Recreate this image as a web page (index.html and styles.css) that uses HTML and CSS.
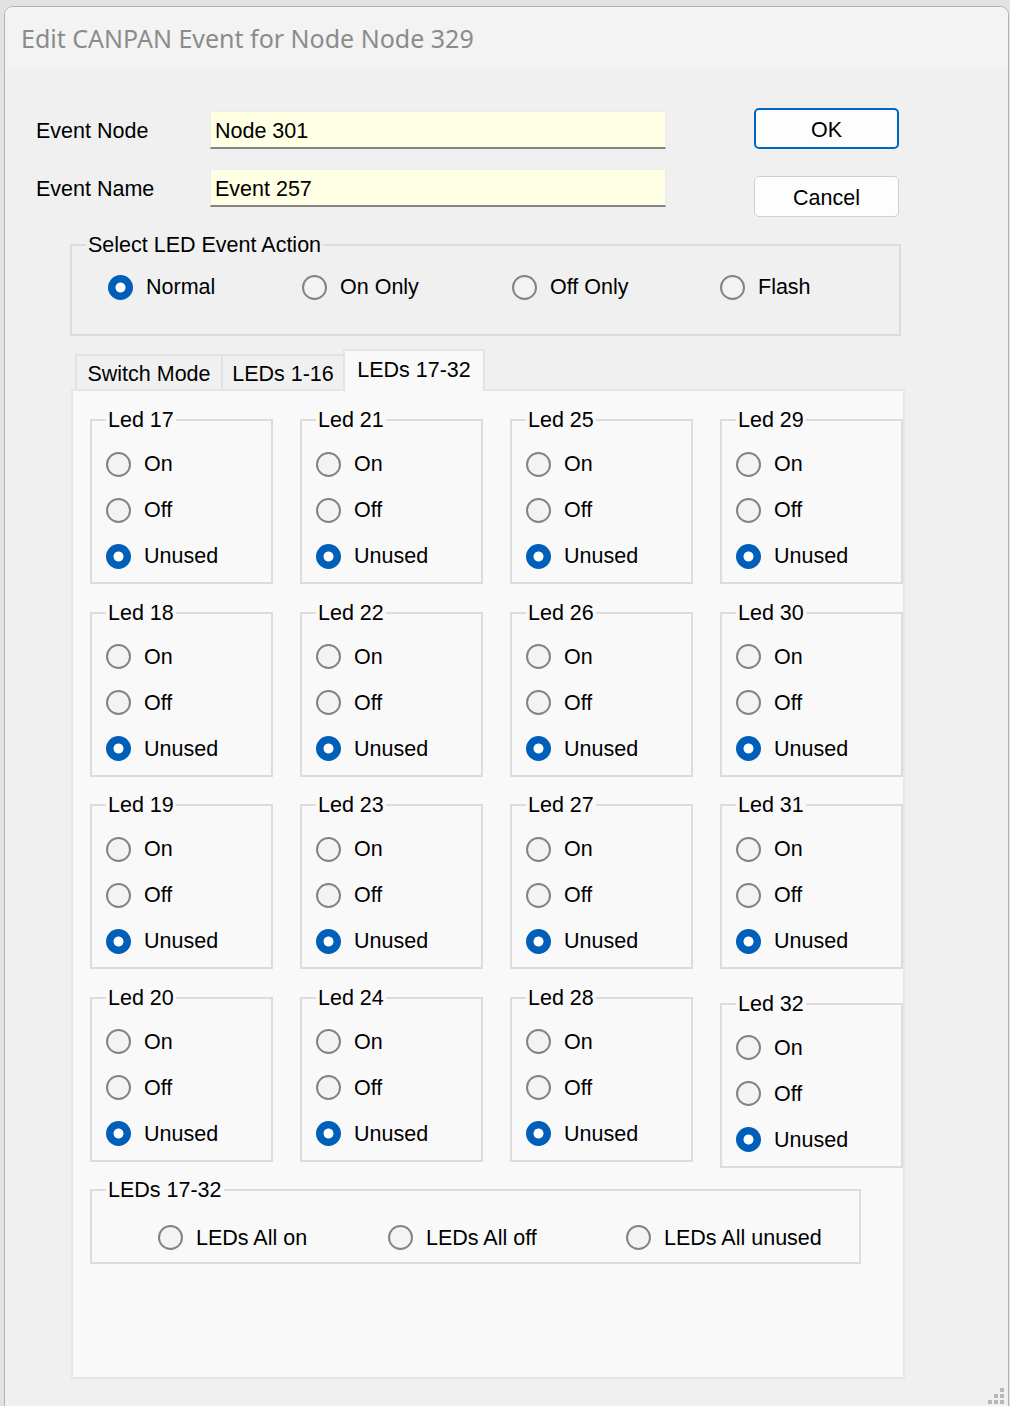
FILE: index.html
```html
<!DOCTYPE html>
<html>
<head>
<meta charset="utf-8">
<title>Edit CANPAN Event</title>
<link rel="stylesheet" href="styles.css">
</head>
<body>
<div class="window">
  <div class="titlebar">Edit CANPAN Event for Node Node 329</div>
  <div class="content">
    <div class="top">
      <div class="fields">
        <div class="row"><span class="label">Event Node</span><div class="input">Node 301</div></div>
        <div class="row"><span class="label">Event Name</span><div class="input">Event 257</div></div>
      </div>
      <div class="buttons">
        <div class="btn btn-default">OK</div>
        <div class="btn">Cancel</div>
      </div>
    </div>

    <fieldset class="action">
      <legend>Select LED Event Action</legend>
      <div class="action-row">
        <label class="opt"><span class="radio checked"></span>Normal</label>
        <label class="opt"><span class="radio"></span>On Only</label>
        <label class="opt"><span class="radio"></span>Off Only</label>
        <label class="opt"><span class="radio"></span>Flash</label>
      </div>
    </fieldset>

    <div class="tabs">
      <div class="tab tab-a">Switch Mode</div>
      <div class="tab tab-b">LEDs 1-16</div>
      <div class="tab tab-c selected">LEDs 17-32</div>
    </div>
    <div class="panel">
      <div class="led-grid">
        <fieldset class="led"><legend>Led 17</legend><label class="opt"><span class="radio"></span>On</label><label class="opt"><span class="radio"></span>Off</label><label class="opt"><span class="radio checked"></span>Unused</label></fieldset>
        <fieldset class="led"><legend>Led 21</legend><label class="opt"><span class="radio"></span>On</label><label class="opt"><span class="radio"></span>Off</label><label class="opt"><span class="radio checked"></span>Unused</label></fieldset>
        <fieldset class="led"><legend>Led 25</legend><label class="opt"><span class="radio"></span>On</label><label class="opt"><span class="radio"></span>Off</label><label class="opt"><span class="radio checked"></span>Unused</label></fieldset>
        <fieldset class="led"><legend>Led 29</legend><label class="opt"><span class="radio"></span>On</label><label class="opt"><span class="radio"></span>Off</label><label class="opt"><span class="radio checked"></span>Unused</label></fieldset>

        <fieldset class="led"><legend>Led 18</legend><label class="opt"><span class="radio"></span>On</label><label class="opt"><span class="radio"></span>Off</label><label class="opt"><span class="radio checked"></span>Unused</label></fieldset>
        <fieldset class="led"><legend>Led 22</legend><label class="opt"><span class="radio"></span>On</label><label class="opt"><span class="radio"></span>Off</label><label class="opt"><span class="radio checked"></span>Unused</label></fieldset>
        <fieldset class="led"><legend>Led 26</legend><label class="opt"><span class="radio"></span>On</label><label class="opt"><span class="radio"></span>Off</label><label class="opt"><span class="radio checked"></span>Unused</label></fieldset>
        <fieldset class="led"><legend>Led 30</legend><label class="opt"><span class="radio"></span>On</label><label class="opt"><span class="radio"></span>Off</label><label class="opt"><span class="radio checked"></span>Unused</label></fieldset>

        <fieldset class="led"><legend>Led 19</legend><label class="opt"><span class="radio"></span>On</label><label class="opt"><span class="radio"></span>Off</label><label class="opt"><span class="radio checked"></span>Unused</label></fieldset>
        <fieldset class="led"><legend>Led 23</legend><label class="opt"><span class="radio"></span>On</label><label class="opt"><span class="radio"></span>Off</label><label class="opt"><span class="radio checked"></span>Unused</label></fieldset>
        <fieldset class="led"><legend>Led 27</legend><label class="opt"><span class="radio"></span>On</label><label class="opt"><span class="radio"></span>Off</label><label class="opt"><span class="radio checked"></span>Unused</label></fieldset>
        <fieldset class="led"><legend>Led 31</legend><label class="opt"><span class="radio"></span>On</label><label class="opt"><span class="radio"></span>Off</label><label class="opt"><span class="radio checked"></span>Unused</label></fieldset>

        <fieldset class="led"><legend>Led 20</legend><label class="opt"><span class="radio"></span>On</label><label class="opt"><span class="radio"></span>Off</label><label class="opt"><span class="radio checked"></span>Unused</label></fieldset>
        <fieldset class="led"><legend>Led 24</legend><label class="opt"><span class="radio"></span>On</label><label class="opt"><span class="radio"></span>Off</label><label class="opt"><span class="radio checked"></span>Unused</label></fieldset>
        <fieldset class="led"><legend>Led 28</legend><label class="opt"><span class="radio"></span>On</label><label class="opt"><span class="radio"></span>Off</label><label class="opt"><span class="radio checked"></span>Unused</label></fieldset>
        <fieldset class="led led-shift"><legend>Led 32</legend><label class="opt"><span class="radio"></span>On</label><label class="opt"><span class="radio"></span>Off</label><label class="opt"><span class="radio checked"></span>Unused</label></fieldset>
      </div>

      <fieldset class="all">
        <legend>LEDs 17-32</legend>
        <div class="all-row">
          <label class="opt"><span class="radio"></span>LEDs All on</label>
          <label class="opt"><span class="radio"></span>LEDs All off</label>
          <label class="opt"><span class="radio"></span>LEDs All unused</label>
        </div>
      </fieldset>
    </div>
  </div>
  <svg class="grip" width="20" height="20" viewBox="0 0 20 20">
    <rect x="12" y="1" width="4" height="4" fill="#b8b8b8"/>
    <rect x="6" y="7" width="4" height="4" fill="#b8b8b8"/>
    <rect x="12" y="7" width="4" height="4" fill="#b8b8b8"/>
    <rect x="0" y="13" width="4" height="4" fill="#b8b8b8"/>
    <rect x="6" y="13" width="4" height="4" fill="#b8b8b8"/>
    <rect x="12" y="13" width="4" height="4" fill="#b8b8b8"/>
  </svg>
</div>
</body>
</html>
```

FILE: styles.css
```css
html, body {
  margin: 0;
  padding: 0;
  height: 1406px;
  overflow: hidden;
  background: #e2e2e2;
}

body {
  font-family: "Liberation Sans", Arial, sans-serif;
  font-size: 21.5px;
  color: #000;
}

.window {
  position: relative;
  box-sizing: border-box;
  margin: 6px 0 0 4px;
  width: 1005px;
  height: 1420px;
  border: 1px solid #b2b2b2;
  border-bottom: none;
  border-radius: 9px 9px 0 0;
  background: #f0f0f0;
  overflow: hidden;
}

.titlebar {
  height: 61px;
  display: flex;
  align-items: center;
  padding-left: 16px;
  background: #f3f3f3;
  font-family: "Noto Sans", "Open Sans", sans-serif;
  font-size: 25px;
  color: #8b8b8b;
}

.content {
  background: #f0f0f0;
}

.top {
  display: flex;
  padding: 40px 0 0 31px;
}

.fields {
  padding-top: 3px;
  display: flex;
  flex-direction: column;
  gap: 20px;
}

.row {
  display: flex;
  align-items: center;
}

.label {
  width: 174px;
  line-height: 24px;
  padding-top: 2px;
}

.input {
  box-sizing: border-box;
  width: 456px;
  height: 38px;
  padding: 3px 0 0 4px;
  display: flex;
  align-items: center;
  background: #ffffe4;
  border-top: 1px solid #ececec;
  border-left: 1px solid #ececec;
  border-right: 1px solid #ececec;
  border-bottom: 2px solid #838383;
}

.buttons {
  margin-left: 88px;
  display: flex;
  flex-direction: column;
  gap: 27px;
}

.btn {
  box-sizing: border-box;
  width: 145px;
  height: 41px;
  padding-top: 3px;
  display: flex;
  align-items: center;
  justify-content: center;
  background: #fdfdfd;
  border: 1px solid #cfcfcf;
  border-radius: 5px;
}

.btn-default {
  border: 2px solid #0067c0;
}

fieldset {
  margin: 0;
  min-width: 0;
  border: 2px solid #dcdcdc;
}

legend {
  padding: 0 2px;
  line-height: 24px;
}

.opt {
  display: flex;
  align-items: center;
  gap: 13px;
  height: 26px;
  line-height: 26px;
  white-space: nowrap;
}

.radio {
  flex: none;
  box-sizing: border-box;
  width: 25px;
  height: 25px;
  border-radius: 50%;
  border: 2px solid #838383;
  background: #f3f3f3;
}

.radio.checked {
  border-color: #005fb8;
  background: radial-gradient(circle, #ffffff 0 4.6px, #005fb8 5.4px);
}

/* action group */
.action {
  box-sizing: border-box;
  width: 831px;
  margin: 16px 0 0 65px;
  padding: 17px 0 34px 36px;
}

.action legend {
  margin-left: -22px;
}

.action-row {
  display: grid;
  grid-template-columns: 194px 210px 208px auto;
}

/* tabs */
.tabs {
  display: flex;
  align-items: flex-end;
  height: 40px;
  margin: 13px 0 0 70px;
  position: relative;
  z-index: 1;
}

.tab {
  box-sizing: border-box;
  height: 35px;
  padding-top: 4px;
  display: flex;
  align-items: center;
  justify-content: center;
  background: #f0f0f0;
  border: 2px solid #e2e2e2;
  border-bottom: none;
  border-right: none;
}

.tab-a { width: 146px; }
.tab-b { width: 122px; }
.tab-c { width: 142px; }

.tab.selected {
  height: 42px;
  margin-bottom: -2px;
  padding: 0 0 2px;
  background: #f9f9f9;
  border: 2px solid #e4e4e4;
  border-bottom: none;
}

.panel {
  box-sizing: border-box;
  width: 834px;
  height: 990px;
  margin-left: 66px;
  padding: 17px 0 0 17px;
  background: #f9f9f9;
  border: 2px solid #e6e6e6;
}

.led-grid {
  display: grid;
  grid-template-columns: repeat(4, 183px);
  column-gap: 27px;
  row-gap: 16.5px;
  align-items: start;
}

.led {
  box-sizing: border-box;
  width: 183px;
  padding: 19px 0 13px 14px;
  display: flex;
  flex-direction: column;
  gap: 20px;
}

.led legend {
  margin-left: 0;
}

.led-shift {
  margin: 6px 0 -6px;
}

.all {
  box-sizing: border-box;
  width: 771px;
  margin-top: 16px;
  padding: 23px 0 11px 66px;
}

.all legend {
  margin-left: -52px;
}

.all-row {
  display: grid;
  grid-template-columns: 230px 238px auto;
}

.grip {
  position: absolute;
  right: 0;
  bottom: 19px;
}
```
